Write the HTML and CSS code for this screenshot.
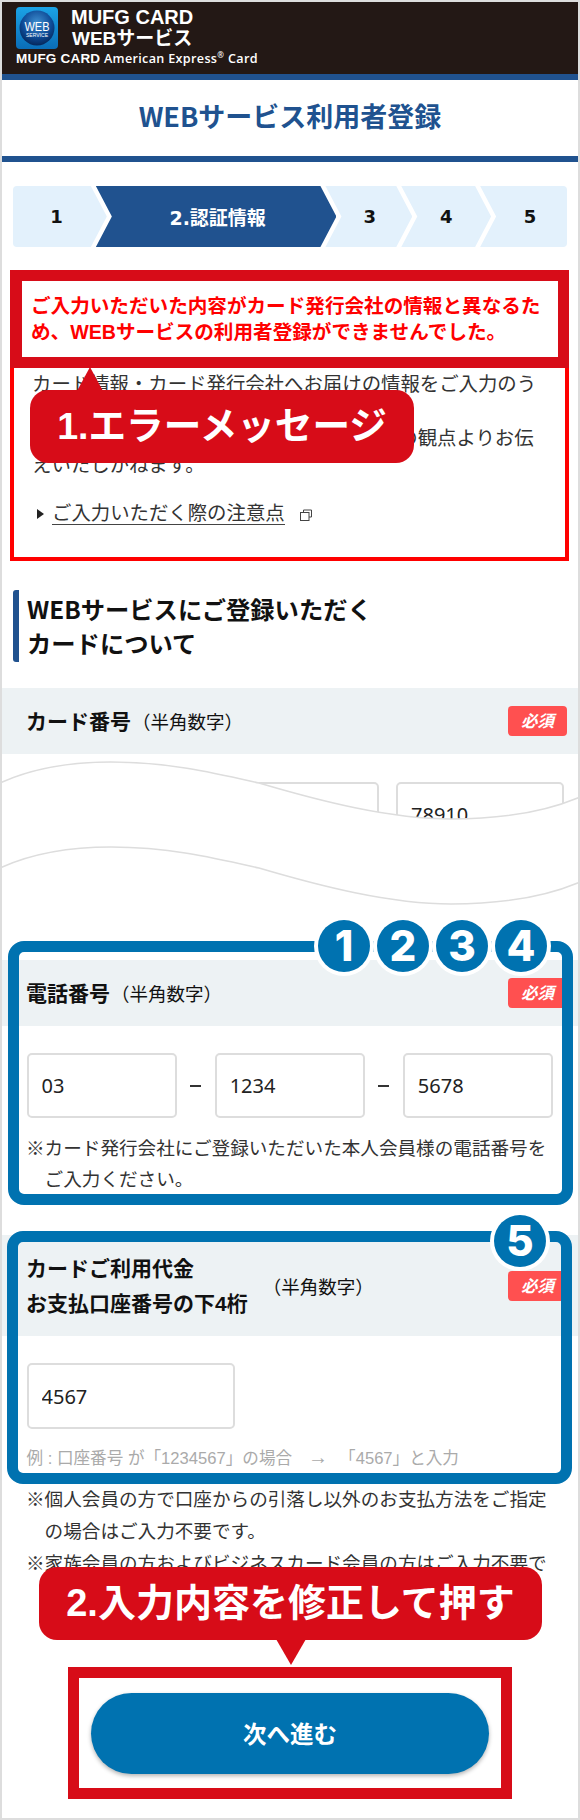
FILE: index.html
```html
<!DOCTYPE html>
<html lang="ja">
<head>
    <meta charset="UTF-8">
    <meta name="viewport" content="width=device-width, initial-scale=1.0">
    <title>WEBサービス利用者登録</title>
    <link rel="stylesheet" href="styles.css">
</head>
<body>
    <div class="page">
        <header class="site-head">
            <div class="brand">
                <svg class="logo" viewBox="0 0 42 42" width="42" height="42">
                    <defs>
                        <linearGradient id="logoBg" x1="0" y1="0" x2="0" y2="1">
                            <stop offset="0" stop-color="#1ba3e6"/>
                            <stop offset="1" stop-color="#0a6db8"/>
                        </linearGradient>
                        <radialGradient id="logoBall" cx="0.5" cy="0.35" r="0.7">
                            <stop offset="0" stop-color="#3f8fd0"/>
                            <stop offset="0.6" stop-color="#0d4a96"/>
                            <stop offset="1" stop-color="#04204f"/>
                        </radialGradient>
                    </defs>
                    <rect width="42" height="42" rx="4" fill="url(#logoBg)"/>
                    <circle cx="21" cy="21" r="17.5" fill="url(#logoBall)"/>
                    <text x="21" y="24" class="logo-web" textLength="25" lengthAdjust="spacingAndGlyphs">WEB</text>
                    <text x="21" y="30" class="logo-sub" textLength="22" lengthAdjust="spacingAndGlyphs">SERVICE</text>
                </svg>
                <div class="brand-name">MUFG CARD<br><span class="brand-web">WEBサービス</span></div>
            </div>
            <div class="brand-card"><b>MUFG CARD</b> American Express<sup>®</sup> Card</div>
        </header>

        <h1 class="page-title">WEBサービス利用者登録</h1>

        <ol class="steps">
            <li class="step step-1">1</li>
            <li class="step step-2 active">2.認証情報</li>
            <li class="step step-3">3</li>
            <li class="step step-4">4</li>
            <li class="step step-5">5</li>
        </ol>

        <section class="error-box">
            <p class="error-msg">ご入力いただいた内容がカード発行会社の情報と異なるため、WEBサービスの利用者登録ができませんでした。</p>
            <p class="error-text">カード情報・カード発行会社へお届けの情報をご入力のうえ、再度お試しください。<br>なお、詳細な理由についてはセキュリティの観点よりお伝えいたしかねます。</p>
            <p class="error-link">
                <a href="#">ご入力いただく際の注意点</a>
                <svg class="ext" viewBox="0 0 12 13" width="12" height="13">
                    <path d="M3.5 3.5V1h8v7H9" fill="none" stroke="#444" stroke-width="1"/>
                    <rect x="0.5" y="3.5" width="8.5" height="8" fill="#fff" stroke="#444" stroke-width="1"/>
                </svg>
            </p>
            <div class="callout callout-up">1.エラーメッセージ</div>
        </section>

        <h2 class="sec-title">WEBサービスにご登録いただく<br>カードについて</h2>

        <div class="field-head first">
            <div class="field-name"><b>カード番号</b><span>（半角数字）</span></div>
            <em class="must">必須</em>
        </div>

        <div class="cut">
            <div class="input-row">
                <input class="text-in wide" type="text" value="123456">
                <input class="text-in" type="text" value="78910">
            </div>
            <svg class="wave" viewBox="0 0 580 160" width="580" height="160">
                <path d="M-5 32 L0 29 C35 13 75 8 111 8 C170 8 215 19 259 29 C320 47 390 65 451 65 C500 65 545 58 580 43 L585 41 L585 126 L580 128 C545 143 500 150 451 150 C390 150 320 132 259 114 C215 104 170 93 111 93 C75 93 35 98 0 114 L-5 117 Z" fill="#fff" stroke="#ddd" stroke-width="1.5"/>
            </svg>
        </div>

        <div class="field">
            <div class="field-head">
                <div class="field-name"><b>電話番号</b><span>（半角数字）</span></div>
                <em class="must">必須</em>
            </div>
            <div class="tel-row">
                <input class="text-in" type="text" value="03">
                <span class="dash"></span>
                <input class="text-in" type="text" value="1234">
                <span class="dash"></span>
                <input class="text-in" type="text" value="5678">
            </div>
            <p class="note">※カード発行会社にご登録いただいた本人会員様の電話番号をご入力ください。</p>
            <div class="mark mark-tel">
                <div class="nums">
                    <span class="num">1</span>
                    <span class="num">2</span>
                    <span class="num">3</span>
                    <span class="num">4</span>
                </div>
            </div>
        </div>

        <div class="field field-bank">
            <div class="field-head tall">
                <div class="field-name"><b>カードご利用代金<br>お支払口座番号の下4桁</b><span>（半角数字）</span></div>
                <em class="must">必須</em>
            </div>
            <input class="text-in bank-in" type="text" value="4567">
            <p class="example">例 : 口座番号 が「1234567」の場合<span class="arrow">→</span>「4567」と入力</p>
            <div class="mark mark-bank">
                <div class="nums">
                    <span class="num">5</span>
                </div>
            </div>
        </div>

        <div class="notes">
            <p class="note">※個人会員の方で口座からの引落し以外のお支払方法をご指定の場合はご入力不要です。</p>
            <p class="note">※家族会員の方およびビジネスカード会員の方はご入力不要です。</p>
        </div>

        <div class="next-box">
            <button class="next-btn" type="button">次へ進む</button>
            <div class="callout callout-down">2.入力内容を修正して押す</div>
        </div>
    </div>
</body>
</html>
```

FILE: styles.css
```css
* {
    box-sizing: border-box;
}
body {
    margin: 0;
    font-family: "Liberation Sans", "Noto Sans CJK JP", sans-serif;
    color: #333;
    background: #fff;
}
p, h1, h2, ol {
    margin: 0;
    padding: 0;
}
.page {
    width: 580px;
    height: 1820px;
    border: 2px solid #ddd;
    background: #fff;
    overflow: hidden;
}

/* header */
.site-head {
    height: 78px;
    padding: 5px 14px 0;
    background: #231815;
    border-bottom: 6px solid #20528f;
    color: #fff;
}
.brand {
    display: flex;
    align-items: center;
    gap: 13px;
}
.logo {
    display: block;
}
.logo text {
    fill: #fff;
    text-anchor: middle;
    font-family: "Liberation Sans", sans-serif;
}
.logo-web {
    font-size: 13px;
}
.logo-sub {
    font-size: 6px;
}
.brand-name {
    font-size: 20px;
    line-height: 21px;
    font-weight: 700;
}
.brand-web {
    margin-left: 1px;
    font-size: 19px;
}
.brand-card {
    margin-top: 2px;
    font-family: "Open Sans", sans-serif;
    font-size: 12.6px;
    line-height: 16px;
    font-weight: 600;
    letter-spacing: 0.33px;
    white-space: nowrap;
}
.brand-card b {
    font-family: "Liberation Sans", sans-serif;
    font-size: 13.5px;
    letter-spacing: 0.2px;
}
.brand-card sup {
    font-size: 8px;
    line-height: 0;
}

.page-title {
    height: 82px;
    border-bottom: 6px solid #20528f;
    font-family: "Noto Sans CJK JP", sans-serif;
    font-size: 27px;
    font-weight: 700;
    line-height: 72px;
    text-align: center;
    color: #20528f;
}

/* steps */
.steps {
    display: flex;
    height: 61px;
    margin: 24px 11px 0;
    list-style: none;
    border-radius: 4px;
    overflow: hidden;
    font-family: "DejaVu Sans", "Noto Sans CJK JP", sans-serif;
    font-size: 18px;
    font-weight: 700;
    color: #111;
}
.step {
    display: flex;
    align-items: center;
    justify-content: center;
    margin-left: -11px;
    background: #e3f1fc;
    clip-path: polygon(0 0, calc(100% - 16px) 0, 100% 50%, calc(100% - 16px) 100%, 0 100%, 16px 50%);
}
.step-1 {
    width: 94px;
    margin-left: 0;
    padding-right: 7px;
    clip-path: polygon(0 0, calc(100% - 16px) 0, 100% 50%, calc(100% - 16px) 100%, 0 100%);
}
.step-2 {
    width: 241px;
}
.step-3 {
    width: 87px;
    padding-left: 2px;
}
.step-4 {
    width: 90px;
}
.step-5 {
    width: 87px;
    padding-left: 13px;
    clip-path: polygon(0 0, 100% 0, 100% 100%, 0 100%, 16px 50%);
}
.step.active {
    background: #20528f;
    color: #fff;
    font-size: 19px;
    padding-left: 3px;
}

/* error box */
.error-box {
    position: relative;
    height: 291px;
    margin: 23px 9px 0 8px;
    border: 4px solid #f00;
}
.error-msg {
    margin: -4px -4px 0;
    padding: 12px 9px;
    border: 11px solid #d70c18;
    border-left-width: 12px;
    background: #fff;
    font-size: 19.6px;
    line-height: 26px;
    font-weight: 700;
    color: #f00;
}
.error-text {
    margin-top: 3px;
    padding: 0 15px 0 18px;
    font-size: 19.4px;
    line-height: 27px;
}
.error-link {
    position: relative;
    margin-top: 21px;
    padding-left: 38px;
    font-size: 19.4px;
    line-height: 27px;
}
.error-link::before {
    content: "";
    position: absolute;
    left: 23px;
    top: 9px;
    border-left: 7px solid #222;
    border-top: 5px solid transparent;
    border-bottom: 5px solid transparent;
}
.error-link a {
    color: #333;
    text-decoration: none;
    border-bottom: 1px solid #444;
}
.ext {
    margin-left: 10px;
    vertical-align: -2px;
}

/* red callouts */
.callout {
    position: absolute;
    height: 73px;
    border-radius: 18px;
    background: #d70c18;
    color: #fff;
    font-size: 37.6px;
    font-weight: 700;
    line-height: 73px;
    text-align: center;
    white-space: nowrap;
}
.callout::after {
    content: "";
    position: absolute;
    border-left: 13px solid transparent;
    border-right: 13px solid transparent;
}
.callout-up {
    left: 16px;
    top: 116px;
    width: 384px;
}
.callout-up::after {
    left: 47px;
    top: -23px;
    border-bottom: 24px solid #d70c18;
}
.callout-down {
    left: -40px;
    top: -111px;
    width: 503px;
    font-size: 38px;
}
.callout-down::after {
    left: 237px;
    top: 72px;
    border-left-width: 15px;
    border-right-width: 15px;
    border-top: 26px solid #d70c18;
}

/* section */
.sec-title {
    height: 72px;
    margin: 29px 0 0 11px;
    padding: 2px 0 0 8px;
    border-left: 6px solid #20528f;
    border-radius: 3px;
    font-family: "Noto Sans CJK JP", sans-serif;
    font-size: 24.3px;
    line-height: 34px;
    font-weight: 700;
    color: #111;
}
.field-head {
    display: flex;
    align-items: center;
    justify-content: space-between;
    height: 66px;
    padding: 0 11px 0 24px;
    background: #edf2f4;
}
.field-head.first {
    margin-top: 26px;
}
.field-head.tall {
    height: 101px;
}
.field-name {
    display: flex;
    align-items: center;
    color: #111;
}
.field-name b {
    font-size: 21px;
    line-height: 35px;
    font-weight: 700;
}
.field-name span {
    font-size: 18.5px;
    margin-left: 1px;
}
.field-head.tall .field-name span {
    margin-left: 15px;
}
.must {
    width: 59px;
    height: 30px;
    border-radius: 4px;
    background: #ff5050;
    color: #fff;
    font-size: 16.5px;
    font-weight: 700;
    line-height: 30px;
    text-align: center;
}

/* inputs */
.text-in {
    display: block;
    width: 100%;
    height: 65px;
    padding: 0 13px;
    border: 2px solid #ddd;
    border-radius: 5px;
    background: #fff;
    font-family: "Noto Sans", sans-serif;
    font-size: 20px;
    color: #222;
    outline: none;
}
.cut {
    position: relative;
    height: 206px;
}
.input-row {
    display: flex;
    gap: 17px;
    padding: 28px 14px 0 25px;
}
.input-row .text-in {
    width: 168px;
}
.input-row .wide {
    width: 352px;
}
.wave {
    position: absolute;
    left: -2px;
    top: 0;
    display: block;
}
.tel-row {
    display: grid;
    grid-template-columns: 1fr 38px 1fr 38px 1fr;
    align-items: center;
    margin-top: 27px;
    padding: 0 25px 0 24.5px;
}
.dash {
    justify-self: center;
    width: 11px;
    height: 2px;
    background: #333;
}
.note {
    margin-top: 15px;
    padding: 0 22px 0 42.6px;
    text-indent: -18.6px;
    font-size: 18.6px;
    line-height: 31px;
}

/* highlight frames */
.field {
    position: relative;
}
.field-bank {
    margin-top: 40px;
}
.mark {
    position: absolute;
    border: 11px solid #0072b0;
    border-radius: 16px;
}
.mark-tel {
    left: 6px;
    right: 5px;
    top: -19px;
    bottom: -10px;
}
.mark-bank {
    left: 5px;
    right: 6px;
    top: -4px;
    bottom: -11px;
}
.nums {
    position: absolute;
    right: 15px;
    top: -32px;
    display: flex;
    gap: 7px;
}
.mark-bank .nums {
    top: -27px;
}
.num {
    width: 52px;
    height: 52px;
    border-radius: 50%;
    background: #0072b0;
    box-shadow: 0 0 0 4px #fff;
    color: #fff;
    font-family: Inter, sans-serif;
    font-size: 42px;
    font-weight: 800;
    line-height: 52px;
    text-align: center;
}
.bank-in {
    width: 208px;
    height: 66px;
    margin: 27px 0 0 24.5px;
}
.example {
    margin-top: 14px;
    padding-left: 24.5px;
    font-size: 16.6px;
    line-height: 28px;
    color: #aaa;
    white-space: nowrap;
}
.arrow {
    margin: 0 11px 0 16px;
    font-size: 20px;
}
.notes {
    margin-top: 11px;
}
.notes .note {
    margin-top: 0;
    line-height: 32px;
}

/* next button */
.next-box {
    position: relative;
    display: flex;
    justify-content: center;
    align-items: center;
    width: 444px;
    height: 132px;
    margin: 55px 0 0 66px;
    border: 11px solid #d70c18;
}
.next-btn {
    width: 398px;
    height: 81px;
    border: none;
    border-radius: 41px;
    background: #0072b0;
    box-shadow: 0 2px 4px rgba(0, 0, 0, 0.3);
    color: #fff;
    font-family: "Noto Sans CJK JP", sans-serif;
    font-size: 23.5px;
    font-weight: 700;
}
```
